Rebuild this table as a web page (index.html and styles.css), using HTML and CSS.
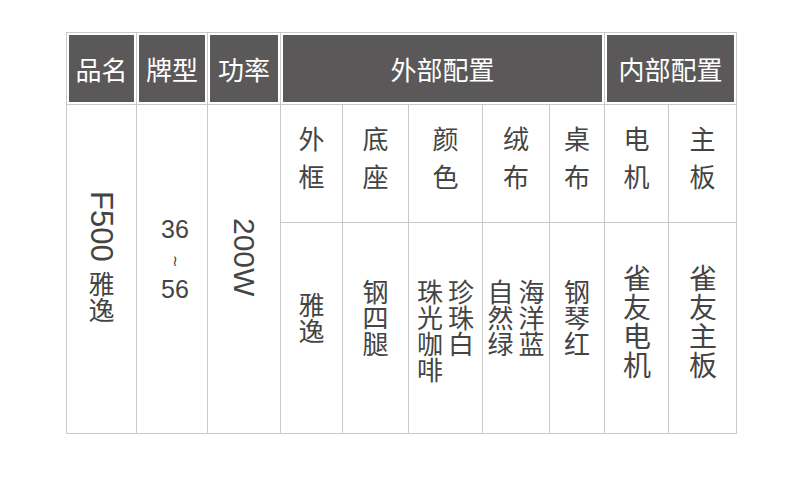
FILE: index.html
```html
<!DOCTYPE html>
<html lang="zh-CN">
<head>
<meta charset="utf-8">
<title>F500 雅逸 参数</title>
<link rel="stylesheet" href="styles.css">
</head>
<body>
<table class="spec">
  <colgroup>
    <col class="c70"><col class="c71"><col class="c73">
    <col class="c62"><col class="c66"><col class="c74"><col class="c67"><col class="c55">
    <col class="c64"><col class="c68">
  </colgroup>
  <tr class="row-head">
    <th>品名</th>
    <th>牌型</th>
    <th>功率</th>
    <th colspan="5">外部配置</th>
    <th colspan="2">内部配置</th>
  </tr>
  <tr class="row-sub">
    <td rowspan="2" class="main"><div class="vt"><span class="lat lat-f">F500</span> 雅逸</div></td>
    <td rowspan="2" class="main size">36<br><span class="tilde">≀</span><br>56</td>
    <td rowspan="2" class="main"><div class="vt"><span class="lat lat-w">200W</span></div></td>
    <td class="sub">外<br>框</td>
    <td class="sub">底<br>座</td>
    <td class="sub">颜<br>色</td>
    <td class="sub">绒<br>布</td>
    <td class="sub">桌<br>布</td>
    <td class="sub">电<br>机</td>
    <td class="sub">主<br>板</td>
  </tr>
  <tr class="row-body">
    <td class="val val-low"><div class="vt">雅逸</div></td>
    <td class="val"><div class="vt">钢四腿</div></td>
    <td class="val"><div class="vt">珍珠白<br>珠光咖啡</div></td>
    <td class="val"><div class="vt">海洋蓝<br>自然绿</div></td>
    <td class="val"><div class="vt">钢琴红</div></td>
    <td class="val val-high"><div class="vt big">雀友电机</div></td>
    <td class="val val-high"><div class="vt big">雀友主板</div></td>
  </tr>
</table>
</body>
</html>
```

FILE: styles.css
```css
html, body {
  margin: 0;
  padding: 0;
  background: #ffffff;
}

body {
  font-family: "Liberation Sans", "Noto Sans CJK SC", sans-serif;
  color: #444444;
}

.spec {
  margin: 32px 0 0 66px;
  border-collapse: collapse;
  table-layout: fixed;
  width: 671px;
}

.c70 { width: 70px; }
.c71 { width: 71px; }
.c73 { width: 73px; }
.c62 { width: 62px; }
.c66 { width: 66px; }
.c74 { width: 74px; }
.c67 { width: 67px; }
.c55 { width: 55px; }
.c64 { width: 64px; }
.c68 { width: 68px; }

.spec th,
.spec td {
  border: 1px solid #cacaca;
  padding: 0;
  text-align: center;
}

.row-head { height: 72px; }
.row-sub { height: 118px; }
.row-body { height: 211px; }

.spec th {
  background: #5a5858;
  box-shadow: inset 0 0 0 2px #ffffff;
  color: #ffffff;
  font-family: "Noto Sans CJK SC", sans-serif;
  font-weight: 400;
  font-size: 26px;
  line-height: 30px;
  vertical-align: middle;
}

.spec .main {
  vertical-align: middle;
  padding-bottom: 20px;
}

.vt {
  display: inline-block;
  writing-mode: vertical-rl;
  text-align: start;
  font-family: "Noto Sans CJK SC", sans-serif;
  font-size: 26px;
  line-height: 31px;
}

.lat {
  font-family: "Liberation Sans", sans-serif;
}

.lat-f {
  font-size: 31px;
  margin-bottom: 4px;
}
.lat-w { font-size: 30px; }

.spec .size {
  font-family: "Liberation Sans", sans-serif;
  font-size: 25px;
  line-height: 28px;
  padding-left: 6px;
}

.tilde {
  font-family: "DejaVu Sans", sans-serif;
  font-size: 15px;
  line-height: 28px;
}

.spec .sub {
  vertical-align: top;
  padding-top: 14px;
  font-family: "Noto Sans CJK SC", sans-serif;
  font-size: 26px;
  line-height: 38px;
}

.spec .val {
  vertical-align: top;
  padding-top: 56px;
}

.spec .val-low { padding-top: 69px; }
.spec .val-high { padding-top: 41px; }

.big {
  font-size: 28px;
  letter-spacing: 1px;
}
```
